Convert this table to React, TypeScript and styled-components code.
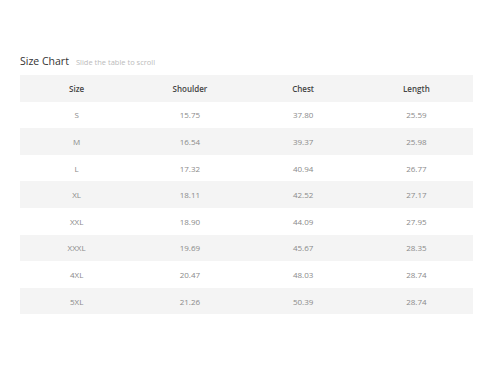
import styled, { createGlobalStyle } from 'styled-components'

const GlobalStyle = createGlobalStyle`
  html, body {
    margin: 0;
    padding: 0;
    background: #fff;
    font-family: 'Open Sans', 'Liberation Sans', sans-serif;
  }
`

const Container = styled.div`
  padding: 54px 27px 0 20px;
`

const Heading = styled.div`
  display: flex;
  align-items: baseline;
  gap: 7px;
  margin-bottom: 7px;
`

const Title = styled.h2`
  margin: 0;
  font-size: 10.5px;
  font-weight: 400;
  color: #333;
`

const Hint = styled.span`
  font-size: 7.5px;
  color: #bbb;
`

const Table = styled.table`
  width: 100%;
  border-collapse: collapse;
  table-layout: fixed;
`

const Row = styled.tr<{ $shaded: boolean }>`
  height: 26.6px;
  background: ${(p) => (p.$shaded ? '#f4f4f4' : '#fff')};
`

const HeadCell = styled.th`
  padding: 0;
  font-size: 8px;
  font-weight: 600;
  color: #444;
  text-align: center;
`

const Cell = styled.td`
  padding: 0;
  font-size: 8px;
  color: #8a8a8a;
  text-align: center;
`

const columns = ['Size', 'Shoulder', 'Chest', 'Length']

const rows = [
  ['S', '15.75', '37.80', '25.59'],
  ['M', '16.54', '39.37', '25.98'],
  ['L', '17.32', '40.94', '26.77'],
  ['XL', '18.11', '42.52', '27.17'],
  ['XXL', '18.90', '44.09', '27.95'],
  ['XXXL', '19.69', '45.67', '28.35'],
  ['4XL', '20.47', '48.03', '28.74'],
  ['5XL', '21.26', '50.39', '28.74'],
]

const App = () => {
  return (
    <Container>
      <GlobalStyle />
      <Heading>
        <Title>Size Chart</Title>
        <Hint>Slide the table to scroll</Hint>
      </Heading>
      <Table>
        <thead>
          <Row $shaded>
            {columns.map((c) => (
              <HeadCell key={c}>{c}</HeadCell>
            ))}
          </Row>
        </thead>
        <tbody>
          {rows.map((r, i) => (
            <Row key={r[0]} $shaded={i % 2 === 1}>
              {r.map((v, j) => (
                <Cell key={j}>{v}</Cell>
              ))}
            </Row>
          ))}
        </tbody>
      </Table>
    </Container>
  )
}

export default App
